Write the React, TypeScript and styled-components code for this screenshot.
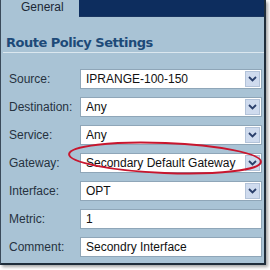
import React from "react";
import styled, { createGlobalStyle } from "styled-components";

const Global = createGlobalStyle`
  html, body { margin: 0; padding: 0; background: #ffffff; }
  body { width: 270px; height: 270px; overflow: hidden; }
`;

const Panel = styled.div`
  position: relative;
  box-sizing: border-box;
  width: 266px;
  height: 265px;
  background: #a9c3d5;
  border-left: 1px solid #3a4a5a;
  border-right: 2px solid #1f2d3a;
  border-bottom: 2px solid #1f2d3a;
  box-shadow: 2px 2px 3px rgba(0, 0, 0, 0.35);
  display: flex;
  flex-direction: column;
  font-family: "Liberation Sans", Arial, sans-serif;
`;

const TabBar = styled.div`
  display: flex;
  height: 17px;
`;

const Tab = styled.div`
  width: 78px;
  background: #a9c3d5;
  color: #1b2735;
  font-size: 12px;
  line-height: 14px;
  padding-left: 20px;
  box-sizing: border-box;
`;

const TabFill = styled.div`
  flex: 1;
  background: #0d2d5e;
  border-bottom: 1px solid #1a3560;
`;

const Title = styled.h1`
  margin: 18px 0 0 2px;
  padding: 0 0 2px 3px;
  font-family: "DejaVu Sans", Verdana, sans-serif;
  font-weight: bold;
  font-size: 13px;
  line-height: 15px;
  color: #1d4a78;
  letter-spacing: -0.5px;
  border-bottom: 1px solid #dbe7ef;
`;

const Form = styled.div`
  position: relative;
  display: grid;
  grid-template-columns: 71px 182px;
  grid-auto-rows: 20px;
  row-gap: 8px;
  padding: 16px 0 0 8px;
`;

const Label = styled.div`
  font-size: 12px;
  line-height: 20px;
  color: #26323f;
`;

const Box = styled.div`
  box-sizing: border-box;
  height: 20px;
  background: #ffffff;
  border: 1px solid #8fa6b8;
  display: flex;
  align-items: center;
  padding-left: 5px;
  font-size: 12px;
  color: #111;
  white-space: nowrap;
  overflow: hidden;
`;

const Value = styled.span`
  flex: 1;
  overflow: hidden;
`;

const Arrow = styled.span`
  box-sizing: border-box;
  width: 15px;
  height: 16px;
  margin-right: 1px;
  background: #cfdbee;
  border: 1px solid #b3c3d9;
  display: flex;
  align-items: center;
  justify-content: center;
`;

const Ellipse = styled.svg`
  position: absolute;
  left: 0;
  top: 0;
  pointer-events: none;
`;

const Chevron = () => (
  <svg width="9" height="6" viewBox="0 0 9 6">
    <path d="M1 1 L4.5 4.5 L8 1" fill="none" stroke="#2a3f6b" strokeWidth="1.8" />
  </svg>
);

type Row = { label: string; value: string; select: boolean };

const rows: Row[] = [
  { label: "Source:", value: "IPRANGE-100-150", select: true },
  { label: "Destination:", value: "Any", select: true },
  { label: "Service:", value: "Any", select: true },
  { label: "Gateway:", value: "Secondary Default Gateway", select: true },
  { label: "Interface:", value: "OPT", select: true },
  { label: "Metric:", value: "1", select: false },
  { label: "Comment:", value: "Secondry Interface", select: false },
];

export default function App() {
  return (
    <>
      <Global />
      <Panel>
        <TabBar>
          <Tab>General</Tab>
          <TabFill />
        </TabBar>
        <Title>Route Policy Settings</Title>
        <Form>
          {rows.map((r) => (
            <React.Fragment key={r.label}>
              <Label>{r.label}</Label>
              <Box>
                <Value>{r.value}</Value>
                {r.select && (
                  <Arrow>
                    <Chevron />
                  </Arrow>
                )}
              </Box>
            </React.Fragment>
          ))}
        </Form>
        <Ellipse width="266" height="265" viewBox="0 0 266 265">
          <ellipse
            cx="164"
            cy="158"
            rx="96"
            ry="15"
            transform="rotate(2.3 164 158)"
            fill="none"
            stroke="#c8162e"
            strokeWidth="2"
          />
        </Ellipse>
      </Panel>
    </>
  );
}
